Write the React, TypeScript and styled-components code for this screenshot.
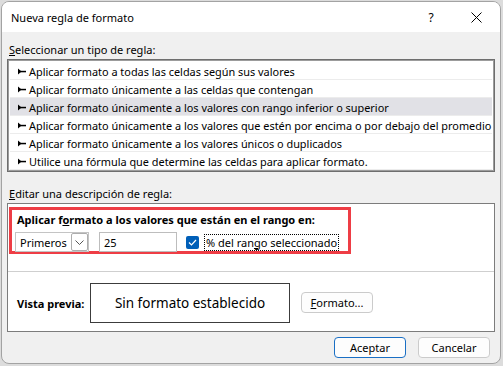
import React from 'react';
import styled, {createGlobalStyle} from 'styled-components';

const GlobalStyle = createGlobalStyle`
  html, body {
    margin: 0;
    padding: 0;
    background: #dcdcdc;
  }
  body {
    font-family: "Segoe UI", "Noto Sans", "Liberation Sans", sans-serif;
    font-size: 11px;
    color: #000;
  }
`;

const ruleTypes = [
  'Aplicar formato a todas las celdas según sus valores',
  'Aplicar formato únicamente a las celdas que contengan',
  'Aplicar formato únicamente a los valores con rango inferior o superior',
  'Aplicar formato únicamente a los valores que estén por encima o por debajo del promedio',
  'Aplicar formato únicamente a los valores únicos o duplicados',
  'Utilice una fórmula que determine las celdas para aplicar formato.',
];

const Dialog = styled.div`
  width: 500px;
  height: 363px;
  margin: 1px 0 0 1px;
  box-sizing: border-box;
  border: 1px solid #a3a3a3;
  border-radius: 8px;
  overflow: hidden;
  background: #f0f0f0;
  display: flex;
  flex-direction: column;
`;

const TitleBar = styled.div`
  height: 30px;
  flex: none;
  background: #fff;
  display: flex;
  align-items: center;
  padding-left: 9px;
`;

const Title = styled.div`
  flex: 1;
  font-size: 11px;
`;

const TitleButton = styled.div<{w: number}>`
  width: ${p => p.w}px;
  height: 30px;
  display: flex;
  align-items: center;
  justify-content: center;
  font-size: 12px;
`;

const Body = styled.div`
  flex: 1;
  display: flex;
  flex-direction: column;
  padding: 0 5px;
`;

const SectionLabel = styled.div<{top: number}>`
  margin-top: ${p => p.top}px;
  height: 16px;
  line-height: 16px;
  padding-left: 2px;
  white-space: nowrap;
`;

const List = styled.div`
  margin-top: 1px;
  width: 488px;
  box-sizing: border-box;
  border: 1px solid #6e6e6e;
  box-shadow: inset 0 0 0 1px #9c9c9c;
  background: #fff;
  padding: 2px 2px 1px 2px;
`;

const Row = styled.div<{selected?: boolean}>`
  height: 18px;
  display: flex;
  align-items: center;
  padding-left: 8px;
  gap: 3px;
  white-space: nowrap;
  font-size: 10.9px;
  background: ${p => (p.selected ? '#e1e1e6' : '#fff')};
  box-shadow: inset 0 -1px 0 #ececec;
`;

const Pointer = () => (
  <svg width="8" height="7" viewBox="0 0 8 7" style={{flex: 'none'}}>
    <path d="M0 0.5 L0 6.5 L3.5 3.5 Z" fill="#000" />
    <rect x="1.5" y="2.8" width="6.5" height="1.5" fill="#000" />
  </svg>
);

const Panel = styled.div`
  margin-top: 1px;
  width: 488px;
  height: 129px;
  box-sizing: border-box;
  border: 1px solid #7c7c7c;
  background: #fff;
  display: flex;
  flex-direction: column;
`;

const Describe = styled.div`
  height: 64px;
  flex: none;
  border-bottom: 1px solid #cfcfcf;
  padding: 3px 0 0 1px;
`;

const Highlight = styled.div`
  width: 342px;
  height: 47px;
  box-sizing: border-box;
  border: 3px solid #ee3d45;
  padding: 2px 0 0 3px;
`;

const BoldLabel = styled.div`
  font-weight: bold;
  height: 16px;
  line-height: 16px;
  padding-left: 2px;
  white-space: nowrap;
`;

const Controls = styled.div`
  margin-top: 4px;
  display: flex;
  align-items: center;
  white-space: nowrap;
`;

const Combo = styled.div`
  width: 74px;
  height: 20px;
  flex: none;
  box-sizing: border-box;
  border: 1px solid #c4c4c4;
  display: flex;
  align-items: center;
  padding-left: 4px;
`;

const ComboText = styled.span`
  flex: 1;
`;

const ComboButton = styled.div`
  width: 17px;
  height: 18px;
  box-sizing: border-box;
  border: 1px solid #adadad;
  border-radius: 2px;
  display: flex;
  align-items: center;
  justify-content: center;
`;

const TextBox = styled.div`
  margin-left: 10px;
  width: 78px;
  height: 20px;
  flex: none;
  box-sizing: border-box;
  border: 1px solid #bdbdbd;
  display: flex;
  align-items: center;
  padding-left: 4px;
`;

const CheckBox = styled.div`
  margin-left: 9px;
  width: 13px;
  height: 13px;
  flex: none;
  border-radius: 2px;
  background: #005fb8;
  display: flex;
  align-items: center;
  justify-content: center;
`;

const CheckLabel = styled.div`
  margin-left: 5px;
  height: 17px;
  line-height: 15px;
  box-sizing: border-box;
  border: 1px dotted #000;
  padding: 0 1px;
`;

const Preview = styled.div`
  flex: 1;
  display: flex;
  align-items: center;
  padding: 3px 0 0 9px;
`;

const PreviewLabel = styled.div`
  font-weight: bold;
  width: 73px;
  flex: none;
  white-space: nowrap;
`;

const PreviewBox = styled.div`
  width: 200px;
  height: 40px;
  flex: none;
  box-sizing: border-box;
  border: 1px solid #3c3c3c;
  display: flex;
  align-items: center;
  justify-content: center;
  font-size: 13.5px;
`;

const Button = styled.div<{primary?: boolean}>`
  width: 72px;
  height: 21px;
  flex: none;
  box-sizing: border-box;
  border: 1px solid ${p => (p.primary ? '#1a6fc4' : '#cbcbcb')};
  border-radius: 4px;
  background: #fdfdfd;
  display: flex;
  align-items: center;
  justify-content: center;
`;

const FormatButton = styled(Button)`
  margin-left: 11px;
  margin-top: -2px;
`;

const Footer = styled.div`
  display: flex;
  justify-content: flex-end;
  gap: 12px;
  padding: 5px 5px 0 0;
`;

export default function App() {
  return (
    <>
      <GlobalStyle />
      <Dialog>
        <TitleBar>
          <Title>Nueva regla de formato</Title>
          <TitleButton w={42}>?</TitleButton>
          <TitleButton w={48}>
            <svg width="11" height="11" viewBox="0 0 11 11">
              <path d="M0.5 0.5 L10.5 10.5 M10.5 0.5 L0.5 10.5" stroke="#000" strokeWidth="1" />
            </svg>
          </TitleButton>
        </TitleBar>
        <Body>
          <SectionLabel top={10}>
            <u>S</u>eleccionar un tipo de regla:
          </SectionLabel>
          <List>
            {ruleTypes.map((r, i) => (
              <Row key={r} selected={i === 2}>
                <Pointer />
                <span>{r}</span>
              </Row>
            ))}
          </List>
          <SectionLabel top={14}>
            <u>E</u>ditar una descripción de regla:
          </SectionLabel>
          <Panel>
            <Describe>
              <Highlight>
                <BoldLabel>
                  Aplicar f<u>o</u>rmato a los valores que están en el rango en:
                </BoldLabel>
                <Controls>
                  <Combo>
                    <ComboText>Primeros</ComboText>
                    <ComboButton>
                      <svg width="9" height="5" viewBox="0 0 9 5">
                        <path d="M0.5 0.5 L4.5 4.5 L8.5 0.5" fill="none" stroke="#555" />
                      </svg>
                    </ComboButton>
                  </Combo>
                  <TextBox>25</TextBox>
                  <CheckBox>
                    <svg width="9" height="7" viewBox="0 0 9 7">
                      <path d="M1 3.5 L3.5 6 L8 1" fill="none" stroke="#fff" strokeWidth="1.2" />
                    </svg>
                  </CheckBox>
                  <CheckLabel>
                    % del ran<u>g</u>o seleccionado
                  </CheckLabel>
                </Controls>
              </Highlight>
            </Describe>
            <Preview>
              <PreviewLabel>Vista previa:</PreviewLabel>
              <PreviewBox>Sin formato establecido</PreviewBox>
              <FormatButton>
                <span>
                  <u>F</u>ormato...
                </span>
              </FormatButton>
            </Preview>
          </Panel>
          <Footer>
            <Button primary>Aceptar</Button>
            <Button>Cancelar</Button>
          </Footer>
        </Body>
      </Dialog>
    </>
  );
}
